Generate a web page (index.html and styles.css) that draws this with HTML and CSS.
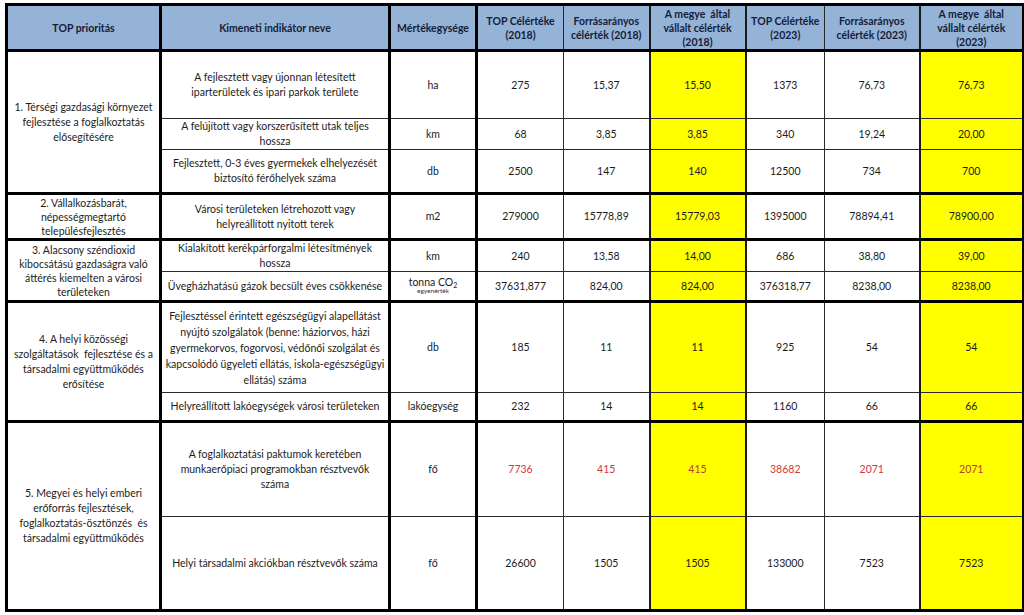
FILE: index.html
```html
<!DOCTYPE html>
<html lang="hu">
<head>
<meta charset="utf-8">
<title>TOP indikátorok</title>
<link rel="stylesheet" href="styles.css">
</head>
<body>
<table class="grid">
  <colgroup>
    <col class="w1"><col class="w2"><col class="w3"><col class="w4"><col class="w5"><col class="w6"><col class="w7"><col class="w8"><col class="w9">
  </colgroup>
  <thead>
    <tr class="hrow">
      <th class="c1">TOP prioritás</th>
      <th class="c2">Kimeneti indikátor neve</th>
      <th class="c3">Mértékegysége</th>
      <th>TOP Célértéke<br>(2018)</th>
      <th class="yl">Forrásarányos<br>célérték (2018)</th>
      <th class="yr">A megye&nbsp; által<br>vállalt célérték<br>(2018)</th>
      <th>TOP Célértéke<br>(2023)</th>
      <th class="yl">Forrásarányos<br>célérték (2023)</th>
      <th>A megye&nbsp; által<br>vállalt célérték<br>(2023)</th>
    </tr>
  </thead>
  <tbody>
    <tr class="grp r68">
      <td class="c1" rowspan="3">1. Térségi gazdasági környezet<br>fejlesztése a foglalkoztatás<br>elősegítésére</td>
      <td class="c2">A fejlesztett vagy újonnan létesített<br>iparterületek és ipari parkok területe</td>
      <td class="c3">ha</td>
      <td>275</td><td class="yl">15,37</td><td class="yel yr">15,50</td>
      <td>1373</td><td class="yl">76,73</td><td class="yel">76,73</td>
    </tr>
    <tr class="r31">
      <td class="c2">A felújított vagy korszerűsített utak teljes<br>hossza</td>
      <td class="c3">km</td>
      <td>68</td><td class="yl">3,85</td><td class="yel yr">3,85</td>
      <td>340</td><td class="yl">19,24</td><td class="yel">20,00</td>
    </tr>
    <tr class="r44">
      <td class="c2">Fejlesztett, 0-3 éves gyermekek elhelyezését<br>biztosító férőhelyek száma</td>
      <td class="c3">db</td>
      <td>2500</td><td class="yl">147</td><td class="yel yr">140</td>
      <td>12500</td><td class="yl">734</td><td class="yel">700</td>
    </tr>

    <tr class="grp r46">
      <td class="c1 tight">2. Vállalkozásbarát,<br>népességmegtartó<br>településfejlesztés</td>
      <td class="c2">Városi területeken létrehozott vagy<br>helyreállított nyitott terek</td>
      <td class="c3">m2</td>
      <td>279000</td><td class="yl">15778,89</td><td class="yel yr">15779,03</td>
      <td>1395000</td><td class="yl">78894,41</td><td class="yel">78900,00</td>
    </tr>

    <tr class="grp r30">
      <td class="c1 tight" rowspan="2">3. Alacsony széndioxid<br>kibocsátású gazdaságra való<br>áttérés kiemelten a városi<br>területeken</td>
      <td class="c2">Kialakított kerékpárforgalmi létesítmények<br>hossza</td>
      <td class="c3">km</td>
      <td>240</td><td class="yl">13,58</td><td class="yel yr">14,00</td>
      <td>686</td><td class="yl">38,80</td><td class="yel">39,00</td>
    </tr>
    <tr class="r30">
      <td class="c2">Üvegházhatású gázok becsült éves csökkenése</td>
      <td class="c3 unit"><span class="u1">tonna CO<sub>2</sub></span><span class="u2">egyenérték</span></td>
      <td>37631,877</td><td class="yl">824,00</td><td class="yel yr">824,00</td>
      <td>376318,77</td><td class="yl">8238,00</td><td class="yel">8238,00</td>
    </tr>

    <tr class="grp r91">
      <td class="c1" rowspan="2">4. A helyi közösségi<br>szolgáltatások&nbsp; fejlesztése és a<br>társadalmi együttműködés<br>erősítése</td>
      <td class="c2 loose">Fejlesztéssel érintett egészségügyi alapellátást<br>nyújtó szolgálatok (benne: háziorvos, házi<br>gyermekorvos, fogorvosi, védőnői szolgálat és<br>kapcsolódó ügyeleti ellátás, iskola-egészségügyi<br>ellátás) száma</td>
      <td class="c3">db</td>
      <td>185</td><td class="yl">11</td><td class="yel yr">11</td>
      <td>925</td><td class="yl">54</td><td class="yel">54</td>
    </tr>
    <tr class="r29">
      <td class="c2">Helyreállított lakóegységek városi területeken</td>
      <td class="c3">lakóegység</td>
      <td>232</td><td class="yl">14</td><td class="yel yr">14</td>
      <td>1160</td><td class="yl">66</td><td class="yel">66</td>
    </tr>

    <tr class="grp r95">
      <td class="c1" rowspan="2">5. Megyei és helyi emberi<br>erőforrás fejlesztések,<br>foglalkoztatás-ösztönzés&nbsp; és<br>társadalmi együttműködés</td>
      <td class="c2">A foglalkoztatási paktumok keretében<br>munkaerőpiaci programokban résztvevők<br>száma</td>
      <td class="c3">fő</td>
      <td class="red">7736</td><td class="red yl">415</td><td class="yel yr red">415</td>
      <td class="red">38682</td><td class="red yl">2071</td><td class="yel red">2071</td>
    </tr>
    <tr class="r94">
      <td class="c2">Helyi társadalmi akciókban résztvevők száma</td>
      <td class="c3">fő</td>
      <td>26600</td><td class="yl">1505</td><td class="yel yr">1505</td>
      <td>133000</td><td class="yl">7523</td><td class="yel">7523</td>
    </tr>
  </tbody>
</table>
</body>
</html>
```
FILE: styles.css
```css
html, body {
  margin: 0;
  padding: 0;
  background: #ffffff;
}

body {
  padding: 3px 0 0 5px;
  font-family: Lato, "Liberation Sans", sans-serif;
  color: #1c1c1c;
}

.grid {
  border-collapse: collapse;
  table-layout: fixed;
  width: 1017px;
  border: 3px solid #000;
  font-size: 10.5px;
  line-height: 15px;
}

.w1 { width: 154px; }
.w2 { width: 229px; }
.w3 { width: 87px; }
.w4 { width: 87px; }
.w5 { width: 86px; }
.w6 { width: 96px; }
.w7 { width: 79px; }
.w8 { width: 95px; }
.w9 { width: 104px; }

th, td {
  border: 1px solid #2a2a2a;
  text-align: center;
  vertical-align: middle;
  padding: 0 3px;
  overflow: hidden;
  white-space: nowrap;
}

th {
  background: #95b3d7;
  font-weight: bold;
  color: #14203a;
  line-height: 14px;
  border-bottom: 3px solid #000;
}

.hrow { height: 46px; }

.c1, .c2, .c3 { border-right: 3px solid #000; }
.yl { border-right: 2px solid #1a1a1a; }
.yr { border-right: 2px solid #1a1a1a; }

.grp > td { border-top: 3px solid #000; }

.yel { background: #ffff00; }
.red { color: #d2373c; }
.yel.red { color: #b8402a; }

.tight { line-height: 14px; }
.loose { line-height: 16px; }

.r68 { height: 68px; }
.r31 { height: 31px; }
.r44 { height: 44px; }
.r46 { height: 46px; }
.r30 { height: 30px; }
.r91 { height: 91px; }
.r29 { height: 29px; }
.r95 { height: 95px; }
.r94 { height: 94px; }

.unit { line-height: 10px; }
.u1 { display: block; }
.u1 sub { font-size: 7px; vertical-align: -2px; line-height: 0; }
.u2 { display: block; font-size: 6.5px; line-height: 8px; color: #333; }
```
